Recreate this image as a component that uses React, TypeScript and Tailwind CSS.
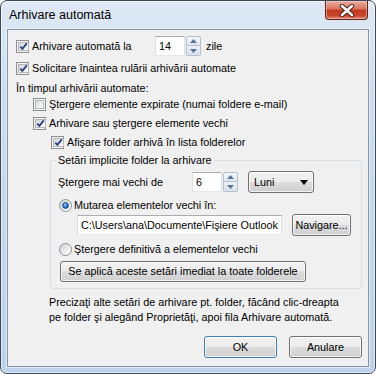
import React from "react";

function Check({ checked = false }: { checked?: boolean }) {
  return (
    <span className="w-[13px] h-[13px] border border-[#8e8f8f] bg-[#f4f4f4] p-[1px] flex shrink-0">
      <span className="flex-1 border border-[#b4b8bd] bg-[linear-gradient(135deg,#d2d4d8_0%,#f0f0f0_60%,#fbfbfb_100%)] flex items-center justify-center">
        {checked && (
          <svg width="9" height="9" viewBox="0 0 9 9">
            <path d="M1.3 4.6 L3.4 6.9 L7.8 1.4" fill="none" stroke="#2a4384" strokeWidth="1.9" />
          </svg>
        )}
      </span>
    </span>
  );
}

function Radio({ checked = false }: { checked?: boolean }) {
  return (
    <span className="w-[13px] h-[13px] rounded-full border border-[#8e8f8f] bg-[linear-gradient(135deg,#d0d2d6_0%,#f4f4f4_70%,#ffffff_100%)] flex items-center justify-center shrink-0">
      {checked && (
        <span className="w-[7px] h-[7px] rounded-full bg-[radial-gradient(circle_at_40%_35%,#a6d0f7_0%,#3c7fd1_45%,#0f3f8f_100%)] border border-[#1b4a8c]" />
      )}
    </span>
  );
}

function Spin() {
  return (
    <div className="flex flex-col w-[15px] h-[20px] ml-[1px]">
      <div className="h-[10px] border border-[#b8c0cc] rounded-t-[2px] bg-[linear-gradient(#f7f9fc,#dfe6ef)] flex items-center justify-center">
        <svg width="7" height="4" viewBox="0 0 7 4">
          <path d="M0 4 L3.5 0 L7 4Z" fill="#56759f" />
        </svg>
      </div>
      <div className="h-[10px] border border-t-0 border-[#b8c0cc] rounded-b-[2px] bg-[linear-gradient(#eef2f7,#d7dfea)] flex items-center justify-center">
        <svg width="7" height="4" viewBox="0 0 7 4">
          <path d="M0 0 L3.5 4 L7 0Z" fill="#56759f" />
        </svg>
      </div>
    </div>
  );
}

function TextBox({ value, w }: { value: string; w: string }) {
  return (
    <div
      className={`${w} h-[20px] bg-white border border-[#abadb3] border-x-[#dbdfe6] border-b-[#e3e9ef] flex items-center pl-[3px] overflow-hidden whitespace-nowrap`}
    >
      {value}
    </div>
  );
}

const btn =
  "h-[22px] border border-[#707070] rounded-[3px] bg-[linear-gradient(#f2f2f2_0%,#ebebeb_50%,#dddddd_50%,#cfcfcf_100%)] shadow-[inset_0_0_0_1px_rgba(255,255,255,0.75)] flex items-center justify-center";

export default function App() {
  return (
    <div className="w-[376px] h-[374px] bg-white font-['Liberation_Sans',Arial,sans-serif] text-black">
      <div className="w-[376px] h-[374px] rounded-[7px] border border-[#3d4856] bg-[linear-gradient(#dfe9f5_0%,#cbdcef_25%,#bcd2ea_100%)] shadow-[inset_0_0_0_1px_rgba(255,255,255,0.55)] flex flex-col">
        <div className="h-[28px] flex items-start justify-between">
          <span className="pl-[8px] pt-[7px] text-[12.5px] leading-[15px]">Arhivare automată</span>
          <div className="mr-[7px] w-[43px] h-[19px] border border-t-0 border-[#5e2217] rounded-b-[4px] bg-[linear-gradient(#eab0a2_0%,#d9705b_45%,#c23b20_50%,#c6432a_80%,#e28a73_100%)] shadow-[inset_0_0_0_1px_rgba(255,210,200,0.5)] flex items-center justify-center">
            <svg width="16" height="13" viewBox="0 0 16 13">
              <path d="M3 2 L13 11 M13 2 L3 11" stroke="#4a1a12" strokeWidth="4.4" strokeLinecap="round" />
              <path d="M3 2 L13 11 M13 2 L3 11" stroke="#ffffff" strokeWidth="2.6" strokeLinecap="round" />
            </svg>
          </div>
        </div>
        <div className="mx-[6px] mb-[6px] flex-1 border border-[#7f93ab] bg-[#f0f0f0] shadow-[0_0_0_1px_rgba(255,255,255,0.6)] flex flex-col text-[10.8px] leading-[13px]">
          <div className="mt-[6px] h-[20px] flex items-center pl-[8px]">
            <div className="w-[139px] flex items-center gap-[3px]">
              <Check checked />
              <span>Arhivare automată la</span>
            </div>
            <TextBox value="14" w="w-[30px]" />
            <Spin />
            <span className="ml-[5px]">zile</span>
          </div>
          <div className="h-[24px] flex items-center pl-[8px] gap-[3px]">
            <Check checked />
            <span>Solicitare înaintea rulării arhivării automate</span>
          </div>
          <div className="h-[16px] flex items-center pl-[8px]">În timpul arhivării automate:</div>
          <div className="h-[16px] flex items-center pl-[25px] gap-[3px]">
            <Check />
            <span>Ştergere elemente expirate (numai foldere e-mail)</span>
          </div>
          <div className="h-[22px] flex items-center pl-[25px] gap-[3px]">
            <Check checked />
            <span>Arhivare sau ştergere elemente vechi</span>
          </div>
          <div className="h-[16px] flex items-center pl-[43px] gap-[3px]">
            <Check checked />
            <span>Afişare folder arhivă în lista folderelor</span>
          </div>
          <fieldset className="ml-[42px] mr-[6px] mt-[3px] border border-[#d5dfe5] rounded-[3px] pt-[5px] pb-[6px]">
            <legend className="ml-[5px] px-[2px] leading-[14px]">Setări implicite folder la arhivare</legend>
            <div className="h-[20px] flex items-center pl-[7px]">
              <span className="w-[134px]">Ştergere mai vechi de</span>
              <TextBox value="6" w="w-[30px]" />
              <Spin />
              <div className={`ml-[10px] w-[66px] ${btn} !justify-between pl-[5px] pr-[5px]`}>
                <span>Luni</span>
                <svg width="8" height="5" viewBox="0 0 8 5">
                  <path d="M0 0 L8 0 L4 5Z" fill="#000" />
                </svg>
              </div>
            </div>
            <div className="mt-[4px] h-[18px] flex items-center pl-[8px] gap-[2px]">
              <Radio checked />
              <span>Mutarea elementelor vechi în:</span>
            </div>
            <div className="mt-[1px] h-[20px] flex items-center pl-[26px]">
              <TextBox value="C:\Users\ana\Documente\Fişiere Outlook" w="w-[205px]" />
              <div className={`ml-[10px] w-[59px] ${btn}`}>Navigare...</div>
            </div>
            <div className="mt-[5px] h-[18px] flex items-center pl-[8px] gap-[2px]">
              <Radio />
              <span>Ştergere definitivă a elementelor vechi</span>
            </div>
            <div className="mt-[3px] flex pl-[9px]">
              <div className={`w-[246px] ${btn} !h-[21px]`}>Se aplică aceste setări imediat la toate folderele</div>
            </div>
          </fieldset>
          <div className="mt-[6px] pl-[41px] leading-[15px]">
            <div>Precizaţi alte setări de arhivare pt. folder, făcând clic-dreapta</div>
            <div>pe folder şi alegând Proprietăţi, apoi fila Arhivare automată.</div>
          </div>
          <div className="mt-auto mb-[8px] flex justify-end gap-[12px] pr-[6px]">
            <div className={`w-[73px] ${btn} !border-[#3c7fb1] shadow-[inset_0_0_0_1px_rgba(150,210,245,0.9)]`}>OK</div>
            <div className={`w-[73px] ${btn}`}>Anulare</div>
          </div>
        </div>
      </div>
    </div>
  );
}
